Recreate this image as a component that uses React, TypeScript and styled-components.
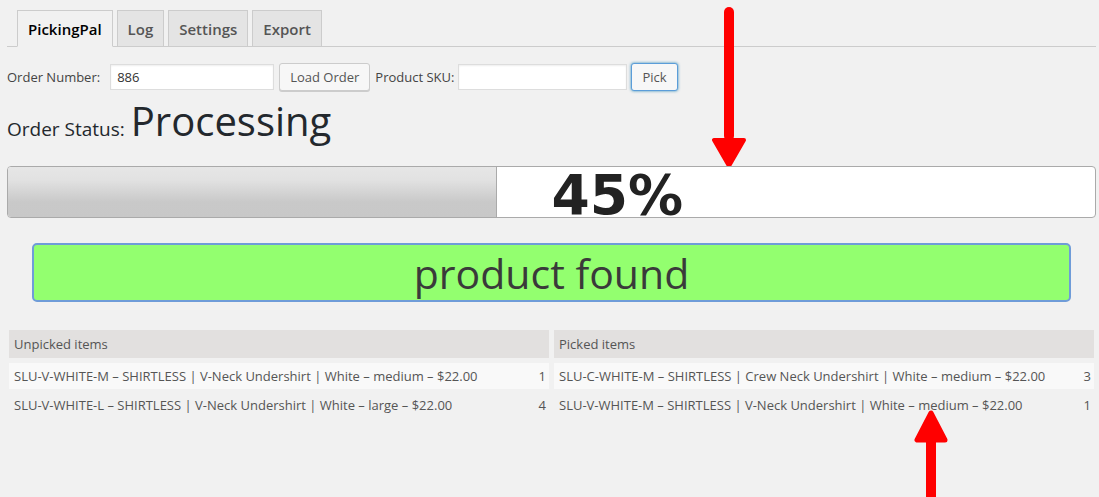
import styled, { createGlobalStyle } from "styled-components";

const GlobalStyle = createGlobalStyle`
  html, body {
    margin: 0;
    padding: 0;
    background: #f1f1f1;
    font-family: "Open Sans", "Liberation Sans", sans-serif;
    color: #444;
  }
  * { box-sizing: border-box; }
`;

const unpicked = [
  { name: "SLU-V-WHITE-M – SHIRTLESS | V-Neck Undershirt | White – medium – $22.00", qty: 1 },
  { name: "SLU-V-WHITE-L – SHIRTLESS | V-Neck Undershirt | White – large – $22.00", qty: 4 },
];

const picked = [
  { name: "SLU-C-WHITE-M – SHIRTLESS | Crew Neck Undershirt | White – medium – $22.00", qty: 3 },
  { name: "SLU-V-WHITE-M – SHIRTLESS | V-Neck Undershirt | White – medium – $22.00", qty: 1 },
];

const tabs = ["PickingPal", "Log", "Settings", "Export"];

const percent = 45;

const ItemTable = ({ title, items }: { title: string; items: { name: string; qty: number }[] }) => (
  <TableBox>
    <TableHead>{title}</TableHead>
    {items.map((item, index) => (
      <TableRow key={index} $alt={index % 2 === 0}>
        <span>{item.name}</span>
        <Qty>{item.qty}</Qty>
      </TableRow>
    ))}
  </TableBox>
);

const DownArrow = () => (
  <svg width="40" height="160" viewBox="0 0 40 160">
    <line x1="20" y1="6" x2="20" y2="130" stroke="#ff0000" strokeWidth="10" strokeLinecap="round" />
    <polygon points="5,134 35,134 20,160" fill="#ff0000" stroke="#ff0000" strokeWidth="4" strokeLinejoin="round" />
  </svg>
);

const UpArrow = () => (
  <svg width="40" height="90" viewBox="0 0 40 90">
    <polygon points="20,3 6,30 34,30" fill="#ff0000" stroke="#ff0000" strokeWidth="5" strokeLinejoin="round" />
    <line x1="20" y1="28" x2="20" y2="90" stroke="#ff0000" strokeWidth="10" />
  </svg>
);

export default function App() {
  return (
    <>
      <GlobalStyle />
      <Page>
        <TabBar>
          {tabs.map((t, i) => (
            <Tab key={t} $active={i === 0}>
              {t}
            </Tab>
          ))}
        </TabBar>

        <FormRow>
          <Label $space={10}>Order Number:</Label>
          <TextInput defaultValue="886" $width={164} />
          <Button>Load Order</Button>
          <Label $space={4}>Product SKU:</Label>
          <TextInput $width={169} />
          <Button $focused>Pick</Button>
        </FormRow>

        <StatusRow>
          <StatusLabel>Order Status:</StatusLabel>
          <StatusValue>Processing</StatusValue>
        </StatusRow>

        <ProgressBar>
          <ProgressFill style={{ width: `${percent}%` }} />
          <ProgressLabel>{percent}%</ProgressLabel>
        </ProgressBar>

        <Message>product found</Message>

        <Tables>
          <ItemTable title="Unpicked items" items={unpicked} />
          <ItemTable title="Picked items" items={picked} />
        </Tables>

        <TopArrow>
          <DownArrow />
        </TopArrow>
        <BottomArrow>
          <UpArrow />
        </BottomArrow>
      </Page>
    </>
  );
}

const Page = styled.div`
  position: relative;
  width: 1099px;
  height: 497px;
  overflow: hidden;
  padding: 10px 3px 0 7px;
`;

const TabBar = styled.div`
  display: flex;
  gap: 4px;
  padding-left: 10px;
  border-bottom: 1px solid #ccc;
  height: 37px;
`;

const Tab = styled.div<{ $active?: boolean }>`
  height: 37px;
  padding: 0 10px;
  display: flex;
  align-items: center;
  font-size: 15px;
  font-weight: 600;
  border: 1px solid #ccc;
  border-bottom: ${(p) => (p.$active ? "1px solid #f1f1f1" : "1px solid #ccc")};
  background: ${(p) => (p.$active ? "#f1f1f1" : "#e4e4e4")};
  color: ${(p) => (p.$active ? "#000" : "#555")};
`;

const FormRow = styled.div`
  display: flex;
  align-items: center;
  gap: 5px;
  margin-top: 16px;
  height: 28px;
`;

const Label = styled.span<{ $space: number }>`
  font-size: 13px;
  color: #444;
  margin-right: ${(p) => p.$space - 5}px;
`;

const TextInput = styled.input<{ $width: number }>`
  width: ${(p) => p.$width}px;
  height: 26px;
  border: 1px solid #ddd;
  box-shadow: inset 0 1px 2px rgba(0, 0, 0, 0.07);
  background: #fff;
  font-family: "Open Sans", "Liberation Sans", sans-serif;
  font-size: 13px;
  color: #333;
  padding: 0 6px;
  outline: none;
`;

const Button = styled.button<{ $focused?: boolean }>`
  height: 28px;
  padding: 0 10px;
  margin-left: ${(p) => (p.$focused ? -1 : 0)}px;
  border-radius: 3px;
  font-family: "Open Sans", "Liberation Sans", sans-serif;
  font-size: 13px;
  color: #555;
  background: #f7f7f7;
  border: 1px solid ${(p) => (p.$focused ? "#5b9dd9" : "#ccc")};
  box-shadow: ${(p) =>
    p.$focused ? "0 0 3px rgba(0, 115, 170, 0.8)" : "0 1px 0 #ccc"};
`;

const StatusRow = styled.div`
  display: flex;
  align-items: baseline;
  gap: 6px;
  margin-top: 2px;
  height: 53px;
`;

const StatusLabel = styled.span`
  font-size: 19px;
  color: #23282d;
`;

const StatusValue = styled.span`
  font-size: 40px;
  color: #23282d;
`;

const ProgressBar = styled.div`
  position: relative;
  margin-top: 20px;
  height: 52px;
  border: 1px solid #aaa;
  border-radius: 4px;
  background: #fff;
`;

const ProgressFill = styled.div`
  height: 100%;
  border-radius: 3px 0 0 3px;
  background: linear-gradient(#e6e6e6, #e2e2e2 25%, #c9c9c9 70%, #c8c8c8);
  border-right: 1px solid #aaa;
`;

const ProgressLabel = styled.div`
  position: absolute;
  left: 50%;
  top: 6px;
  font-family: "DejaVu Sans", Verdana, sans-serif;
  font-weight: bold;
  font-size: 55px;
  line-height: 44px;
  color: #222;
`;

const Message = styled.div`
  margin: 25px 25px 0;
  height: 59px;
  border: 2px solid #6f9cd8;
  border-radius: 5px;
  background: #93ff6f;
  display: flex;
  align-items: center;
  justify-content: center;
  font-size: 41px;
  color: #3a3a3a;
`;

const Tables = styled.div`
  display: grid;
  grid-template-columns: 1fr 1fr;
  gap: 5px;
  margin: 28px 2px 0;
`;

const TableBox = styled.div`
  display: flex;
  flex-direction: column;
  gap: 3px;
`;

const TableHead = styled.div`
  height: 28px;
  display: flex;
  align-items: center;
  padding: 0 5px;
  background: #e2e0df;
  font-size: 13px;
  color: #555;
  margin-bottom: 2px;
`;

const TableRow = styled.div<{ $alt?: boolean }>`
  height: 26px;
  display: flex;
  align-items: center;
  justify-content: space-between;
  padding: 0 3px 0 5px;
  background: ${(p) => (p.$alt ? "#f9f9f9" : "transparent")};
  font-size: 13px;
  color: #555;
`;

const Qty = styled.span`
  text-align: right;
`;

const TopArrow = styled.div`
  position: absolute;
  left: 709px;
  top: 6px;
`;

const BottomArrow = styled.div`
  position: absolute;
  left: 911px;
  top: 410px;
`;
